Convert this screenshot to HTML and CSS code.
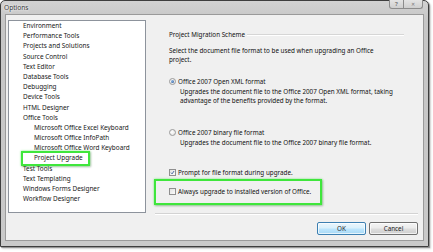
FILE: index.html
```html
<!DOCTYPE html>
<html>
<head>
<meta charset="utf-8">
<title>Options</title>
<link rel="stylesheet" href="styles.css">
</head>
<body>
<div class="page">
  <div class="window">
    <div class="titlebar">
      <span class="title">Options</span>
      <div class="caption-btns">
        <span class="cbtn help">?</span>
        <span class="cbtn close">&#x2715;</span>
      </div>
    </div>
    <div class="client">
      <ul class="tree">
        <li>Environment</li>
        <li>Performance Tools</li>
        <li>Projects and Solutions</li>
        <li>Source Control</li>
        <li>Text Editor</li>
        <li>Database Tools</li>
        <li>Debugging</li>
        <li>Device Tools</li>
        <li>HTML Designer</li>
        <li>Office Tools</li>
        <li class="child">Microsoft Office Excel Keyboard</li>
        <li class="child">Microsoft Office InfoPath</li>
        <li class="child">Microsoft Office Word Keyboard</li>
        <li class="child">Project Upgrade</li>
        <li>Test Tools</li>
        <li>Text Templating</li>
        <li>Windows Forms Designer</li>
        <li>Workflow Designer</li>
      </ul>
      <div class="right">
        <div class="group">
          <div class="gheader"><span class="gtitle">Project Migration Scheme</span><span class="gline"></span></div>
          <p class="intro">Select the document file format to be used when upgrading an Office<br>project.</p>
          <div class="opt opt-first"><span class="radio checked"></span><span>Office 2007 Open XML format</span></div>
          <p class="optdesc">Upgrades the document file to the Office 2007 Open XML format, taking<br>advantage of the benefits provided by the format.</p>
          <div class="opt opt-second"><span class="radio"></span><span>Office 2007 binary file format</span></div>
          <p class="optdesc">Upgrades the document file to the Office 2007 binary file format.</p>
          <div class="opt chk-first"><span class="check checked"><svg viewBox="0 0 6 6" width="6" height="6"><path d="M1.2 3.2 L2.5 4.6 L4.9 1.2" fill="none" stroke="#2a4f95" stroke-width="1"/></svg></span><span>Prompt for file format during upgrade.</span></div>
          <div class="opt chk-second"><span class="check"></span><span>Always upgrade to installed version of Office.</span></div>
        </div>
        <div class="buttons">
          <button class="btn btn-ok">OK</button>
          <button class="btn">Cancel</button>
        </div>
      </div>
    </div>
  </div>
  <div class="mark mark-tree"></div>
  <div class="mark mark-check"></div>
</div>
</body>
</html>
```
FILE: styles.css
```css
html, body {
  margin: 0;
  padding: 0;
  background: #ffffff;
}
body {
  font-family: "Noto Sans", "Open Sans", "DejaVu Sans", sans-serif;
  font-size: 6.4px;
  color: #161616;
}
.page {
  position: relative;
  width: 433px;
  height: 252px;
}
.window {
  box-sizing: border-box;
  width: 429px;
  height: 247px;
  border: 1px solid #3e3e3e;
  border-radius: 5px 5px 0 0;
  background: linear-gradient(#d2d2d2, #c6c6c6 20px, #c9c9c9);
  box-shadow: 1px 1px 1px rgba(0,0,0,0.35), 2px 2px 2px rgba(0,0,0,0.15);
  display: flex;
  flex-direction: column;
}
.titlebar {
  height: 13px;
  display: flex;
  align-items: flex-start;
}
.title {
  padding-left: 3px;
  line-height: 13px;
  color: #3a3a3a;
  font-size: 6.6px;
  text-shadow: 0 0 3px #f4f4f4, 0 0 2px #ffffff;
}
.caption-btns {
  margin-left: auto;
  margin-right: 5px;
  margin-top: -1px;
  display: flex;
}
.cbtn {
  box-sizing: border-box;
  height: 9px;
  border: 1px solid #8c8c8c;
  border-top: none;
  background: linear-gradient(#e4e4e4, #cfcfcf);
  color: #7a7a7a;
  font-size: 6px;
  line-height: 8px;
  text-align: center;
  font-weight: bold;
}
.help {
  width: 15px;
  border-radius: 0 0 0 3px;
}
.close {
  width: 19px;
  border-left: none;
  border-radius: 0 0 3px 0;
  font-size: 5px;
}
.client {
  box-sizing: border-box;
  height: 227px;
  margin: 0 4px;
  border: 1px solid #9a9a9a;
  background: #f0f0f0;
  display: flex;
  align-items: flex-start;
}
.tree {
  box-sizing: border-box;
  list-style: none;
  margin: 5px 0 0 2px;
  padding: 0 0 0 14px;
  width: 138px;
  height: 193px;
  border: 1px solid #8d939c;
  background: #ffffff;
}
.tree li {
  line-height: 10.2px;
  height: 10.2px;
  white-space: nowrap;
  color: #161616;
}
.tree li.child {
  padding-left: 11px;
}
.right {
  margin: 5px 0 0 9px;
  width: 263px;
  display: flex;
  flex-direction: column;
  font-size: 6.3px;
  color: #111111;
}
.group {
  box-sizing: border-box;
  height: 194px;
  padding: 10px 14px 0 14px;
  border-bottom: 1px solid #d3d3d3;
  box-shadow: 0 1px 0 #ffffff;
}
.gheader {
  display: flex;
  align-items: center;
  height: 10px;
  line-height: 10px;
}
.gline {
  flex: 1;
  margin-left: 2px;
  border-top: 1px solid #d6d6d6;
  border-bottom: 1px solid #ffffff;
}
.intro {
  margin: 6px 0 0 0;
  line-height: 9px;
}
.opt {
  display: flex;
  align-items: center;
  height: 9px;
  line-height: 9px;
  white-space: nowrap;
}
.opt-first { margin-top: 13px; }
.opt-second { margin-top: 23px; }
.chk-first { margin-top: 21px; }
.chk-second { margin-top: 10px; }
.optdesc {
  margin: 0.5px 0 0 0;
  padding-left: 11px;
  line-height: 9.3px;
}
.radio {
  box-sizing: border-box;
  width: 7px;
  height: 7px;
  margin-right: 2px;
  border: 1px solid #9a9a9a;
  border-radius: 50%;
  background: radial-gradient(circle at 40% 40%, #ffffff, #dcdcdc);
  display: flex;
  align-items: center;
  justify-content: center;
}
.radio.checked::after {
  content: "";
  width: 3px;
  height: 3px;
  border-radius: 50%;
  background: radial-gradient(circle at 35% 35%, #8fb8e6, #1f4f8f);
}
.check {
  box-sizing: border-box;
  width: 7px;
  height: 7px;
  margin-right: 2px;
  border: 1px solid #8f8f8f;
  background: linear-gradient(135deg, #e2e2e2, #fbfbfb);
  display: flex;
  align-items: center;
  justify-content: center;
}
.check svg {
  display: block;
  width: 5px;
  height: 5px;
}
.buttons {
  margin-top: 8px;
  display: flex;
  justify-content: flex-end;
  gap: 3px;
}
.btn {
  box-sizing: border-box;
  width: 49px;
  height: 13px;
  margin: 0;
  padding: 0;
  font-family: inherit;
  font-size: 6.3px;
  line-height: 11px;
  color: #1c1c1c;
  border: 1px solid #707070;
  border-radius: 2px;
  background: linear-gradient(#f4f4f4 0%, #ebebeb 48%, #dddddd 52%, #cfcfcf 100%);
  box-shadow: inset 0 0 0 1px rgba(255,255,255,0.7);
}
.btn-ok {
  border-color: #3c7fb1;
  background: linear-gradient(#eaf6fd 0%, #d9f0fc 48%, #bee6fd 52%, #a7d9f5 100%);
}
.mark {
  position: absolute;
  box-sizing: border-box;
  border: 2px solid #3fe63c;
  box-shadow: 0 0 2px rgba(80,240,80,0.7), 1px 1px 2px rgba(0,0,0,0.25);
}
.mark-tree {
  left: 21px;
  top: 151px;
  width: 69px;
  height: 15px;
}
.mark-check {
  left: 154px;
  top: 179px;
  width: 168px;
  height: 26px;
}
```
